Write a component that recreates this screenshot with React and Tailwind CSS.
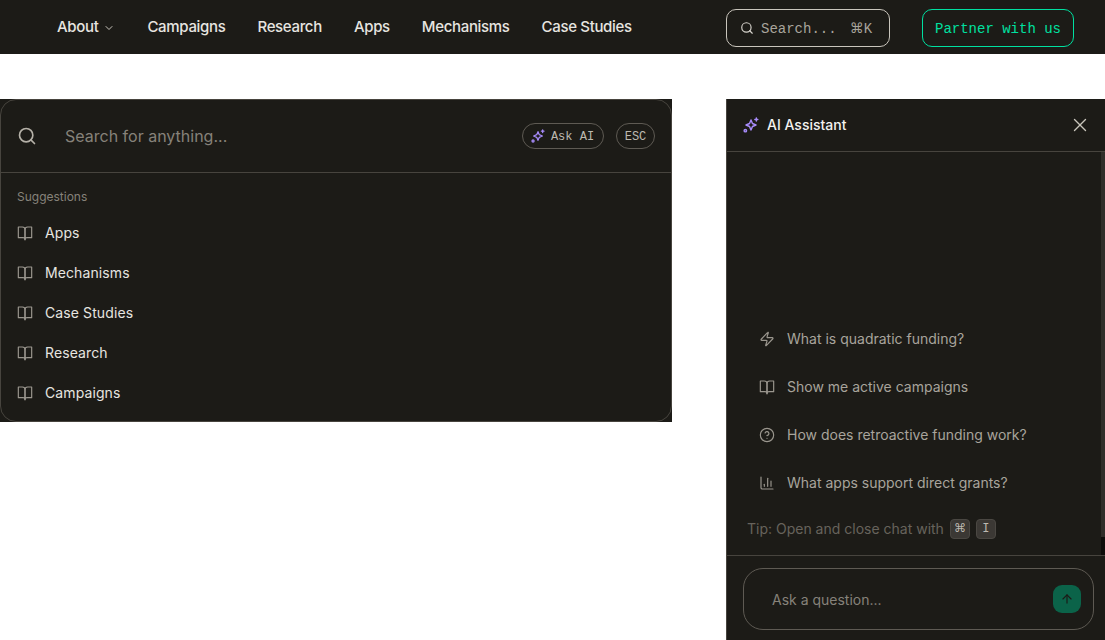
import React from 'react';
import { Search, ChevronDown, X, Zap, CircleHelp, ChartColumn, ArrowUp } from 'lucide-react';

const sans = 'font-["Inter",sans-serif]';
const mono = 'font-["Liberation_Mono","DejaVu_Sans",monospace]';

const Sparkles = ({ className = '' }) => (
  <svg viewBox="0 0 24 24" fill="none" stroke="currentColor" strokeWidth="2.2" strokeLinecap="round" strokeLinejoin="round" className={className}>
    <path d="M12 4.500l2.200 5.300 5.300 2.200-5.300 2.200-2.200 5.300-2.200-5.300-5.300-2.200 5.300-2.200z" />
    <path d="M20 1.500v4.500M17.800 3.700h4.400" />
    <circle cx="3.500" cy="20.500" r="1.800" />
  </svg>
);

// flat-topped book, lucide's current BookOpen has a curved top
const Book = ({ className = '' }) => (
  <svg viewBox="0 0 24 24" fill="none" stroke="currentColor" strokeWidth="1.750" strokeLinecap="round" strokeLinejoin="round" className={className}>
    <path d="M2 3h6a4 4 0 0 1 4 4v15a3 3 0 0 0-3-3H2z" />
    <path d="M22 3h-6a4 4 0 0 0-4 4v15a3 3 0 0 1 3-3h7z" />
  </svg>
);

const navLinks = ['Campaigns', 'Research', 'Apps', 'Mechanisms', 'Case Studies'];
const suggestions = ['Apps', 'Mechanisms', 'Case Studies', 'Research', 'Campaigns'];
const prompts = [
  { icon: Zap, text: 'What is quadratic funding?' },
  { icon: Book, text: 'Show me active campaigns' },
  { icon: CircleHelp, text: 'How does retroactive funding work?' },
  { icon: ChartColumn, text: 'What apps support direct grants?' },
];

const Nav = () => (
  <header className="flex h-[54px] items-center bg-[#1c1b17] pl-[57px] pr-[31px]">
    <nav className="flex items-center gap-8 text-[15px] font-medium tracking-[-0.022em] text-[#e7e5e0]">
      <span className="flex items-center gap-[5px]">
        About
        <ChevronDown size={12} className="mt-[2px] text-[#c9c5bc]" />
      </span>
      {navLinks.map((link) => (
        <span key={link}>{link}</span>
      ))}
    </nav>
    <div className={`ml-auto mt-[2px] flex items-center gap-8 text-sm ${mono}`}>
      <div className="flex h-[38px] w-[164px] items-center rounded-[10px] border border-[#c9c5bc] pl-[13px] text-[#a8a49c]">
        <Search size={14} className="text-[#d6d3cc]" />
        <span className="ml-[7px] pt-px">Search...</span>
        <span className="ml-[13px] pt-px">⌘K</span>
      </div>
      <div className="flex h-[38px] w-[152px] items-center justify-center rounded-[10px] border border-[#00e0a0] pt-px text-[#00e0a0]">
        Partner with us
      </div>
    </div>
  </header>
);

const SearchPanel = () => (
  <section className="h-[323px] w-[672px] bg-[#1c1b17]">
    <div className="h-full rounded-2xl border border-[#47443e]">
      <div className="flex h-[73px] items-center border-b border-[#47443e] pl-4 pr-4">
        <Search size={20} className="text-[#b5b1a8]" />
        <span className="ml-7 text-base text-[#86827a]">Search for anything...</span>
        <div className={`ml-auto flex items-center gap-3 text-xs text-[#bdb9b0] ${mono}`}>
          <span className="flex h-[26px] w-[82px] items-center justify-center gap-[6px] rounded-full border border-[#5e5a53] pr-px">
            <Sparkles className="h-[14px] w-[14px] text-[#a78bfa]" />
            <span className="pt-[2px]">Ask AI</span>
          </span>
          <span className="flex h-[26px] w-[39px] items-center justify-center rounded-full border border-[#5e5a53] pt-[2px]">ESC</span>
        </div>
      </div>
      <p className="ml-4 mt-4 text-xs leading-4 text-[#86827a]">Suggestions</p>
      <ul className="mt-2 text-sm tracking-[0.1px]">
        {suggestions.map((item) => (
          <li key={item} className="flex h-10 items-center gap-3 pl-4 text-[#e7e5e0]">
            <Book className="h-4 w-4 text-[#9a968e]" />
            {item}
          </li>
        ))}
      </ul>
    </div>
  </section>
);

const ChatPanel = () => (
  <aside className="flex h-[541px] w-[379px] flex-col border-l border-[#47443e] bg-[#1c1b17]">
    <div className="flex h-[53px] shrink-0 items-center border-b border-[#47443e] pl-4 pr-[14px]">
      <Sparkles className="h-4 w-4 text-[#a78bfa]" />
      <span className="ml-2 text-sm font-medium text-[#f3f2ef]">AI Assistant</span>
      <X size={22} strokeWidth={1.5} className="ml-auto text-[#c9c5bc]" />
    </div>
    <div className="flex min-h-0 flex-1 border-b border-[#47443e]">
      <div className="flex-1 pl-[20px] pt-[175px]">
        <ul className="flex flex-col gap-6 pl-[12px] text-sm text-[#a8a49c]">
          {prompts.map(({ icon: Icon, text }) => (
            <li key={text} className="flex h-6 items-center gap-3">
              <Icon size={16} strokeWidth={1.75} className="h-4 w-4 text-[#9a968e]" />
              {text}
            </li>
          ))}
        </ul>
        <p className="mt-6 flex items-center gap-[6px] text-sm text-[#67635c]">
          Tip: Open and close chat with
          <kbd className={`flex h-5 w-5 items-center justify-center rounded border border-[#4a4742] bg-[#3b3834] text-xs text-[#bdb9b0] ${mono}`}>⌘</kbd>
          <kbd className={`flex h-5 w-5 items-center justify-center rounded border border-[#4a4742] bg-[#3b3834] text-xs text-[#bdb9b0] ${mono}`}>I</kbd>
        </p>
      </div>
      <div className="flex w-1 flex-col">
        <div className="flex-1 bg-[#302e2a]" />
        <div className="h-[18px] bg-[#0e0d0b]" />
      </div>
    </div>
    <div className="h-[84px] shrink-0 pl-4 pr-[11px] pt-3">
      <div className="flex h-[62px] items-center rounded-[20px] border border-[#5e5a53] pl-7 pr-3">
        <span className="pt-px text-sm text-[#86827a]">Ask a question...</span>
        <span className="ml-auto flex h-7 w-7 items-center justify-center rounded-[9px] bg-[#0b6349] text-[#1c1b17]">
          <ArrowUp size={14} />
        </span>
      </div>
    </div>
  </aside>
);

export default function App() {
  return (
    <div className={`h-[640px] overflow-hidden bg-white ${sans}`}>
      <Nav />
      <main className="flex items-start justify-between pt-[45px]">
        <SearchPanel />
        <ChatPanel />
      </main>
    </div>
  );
}
